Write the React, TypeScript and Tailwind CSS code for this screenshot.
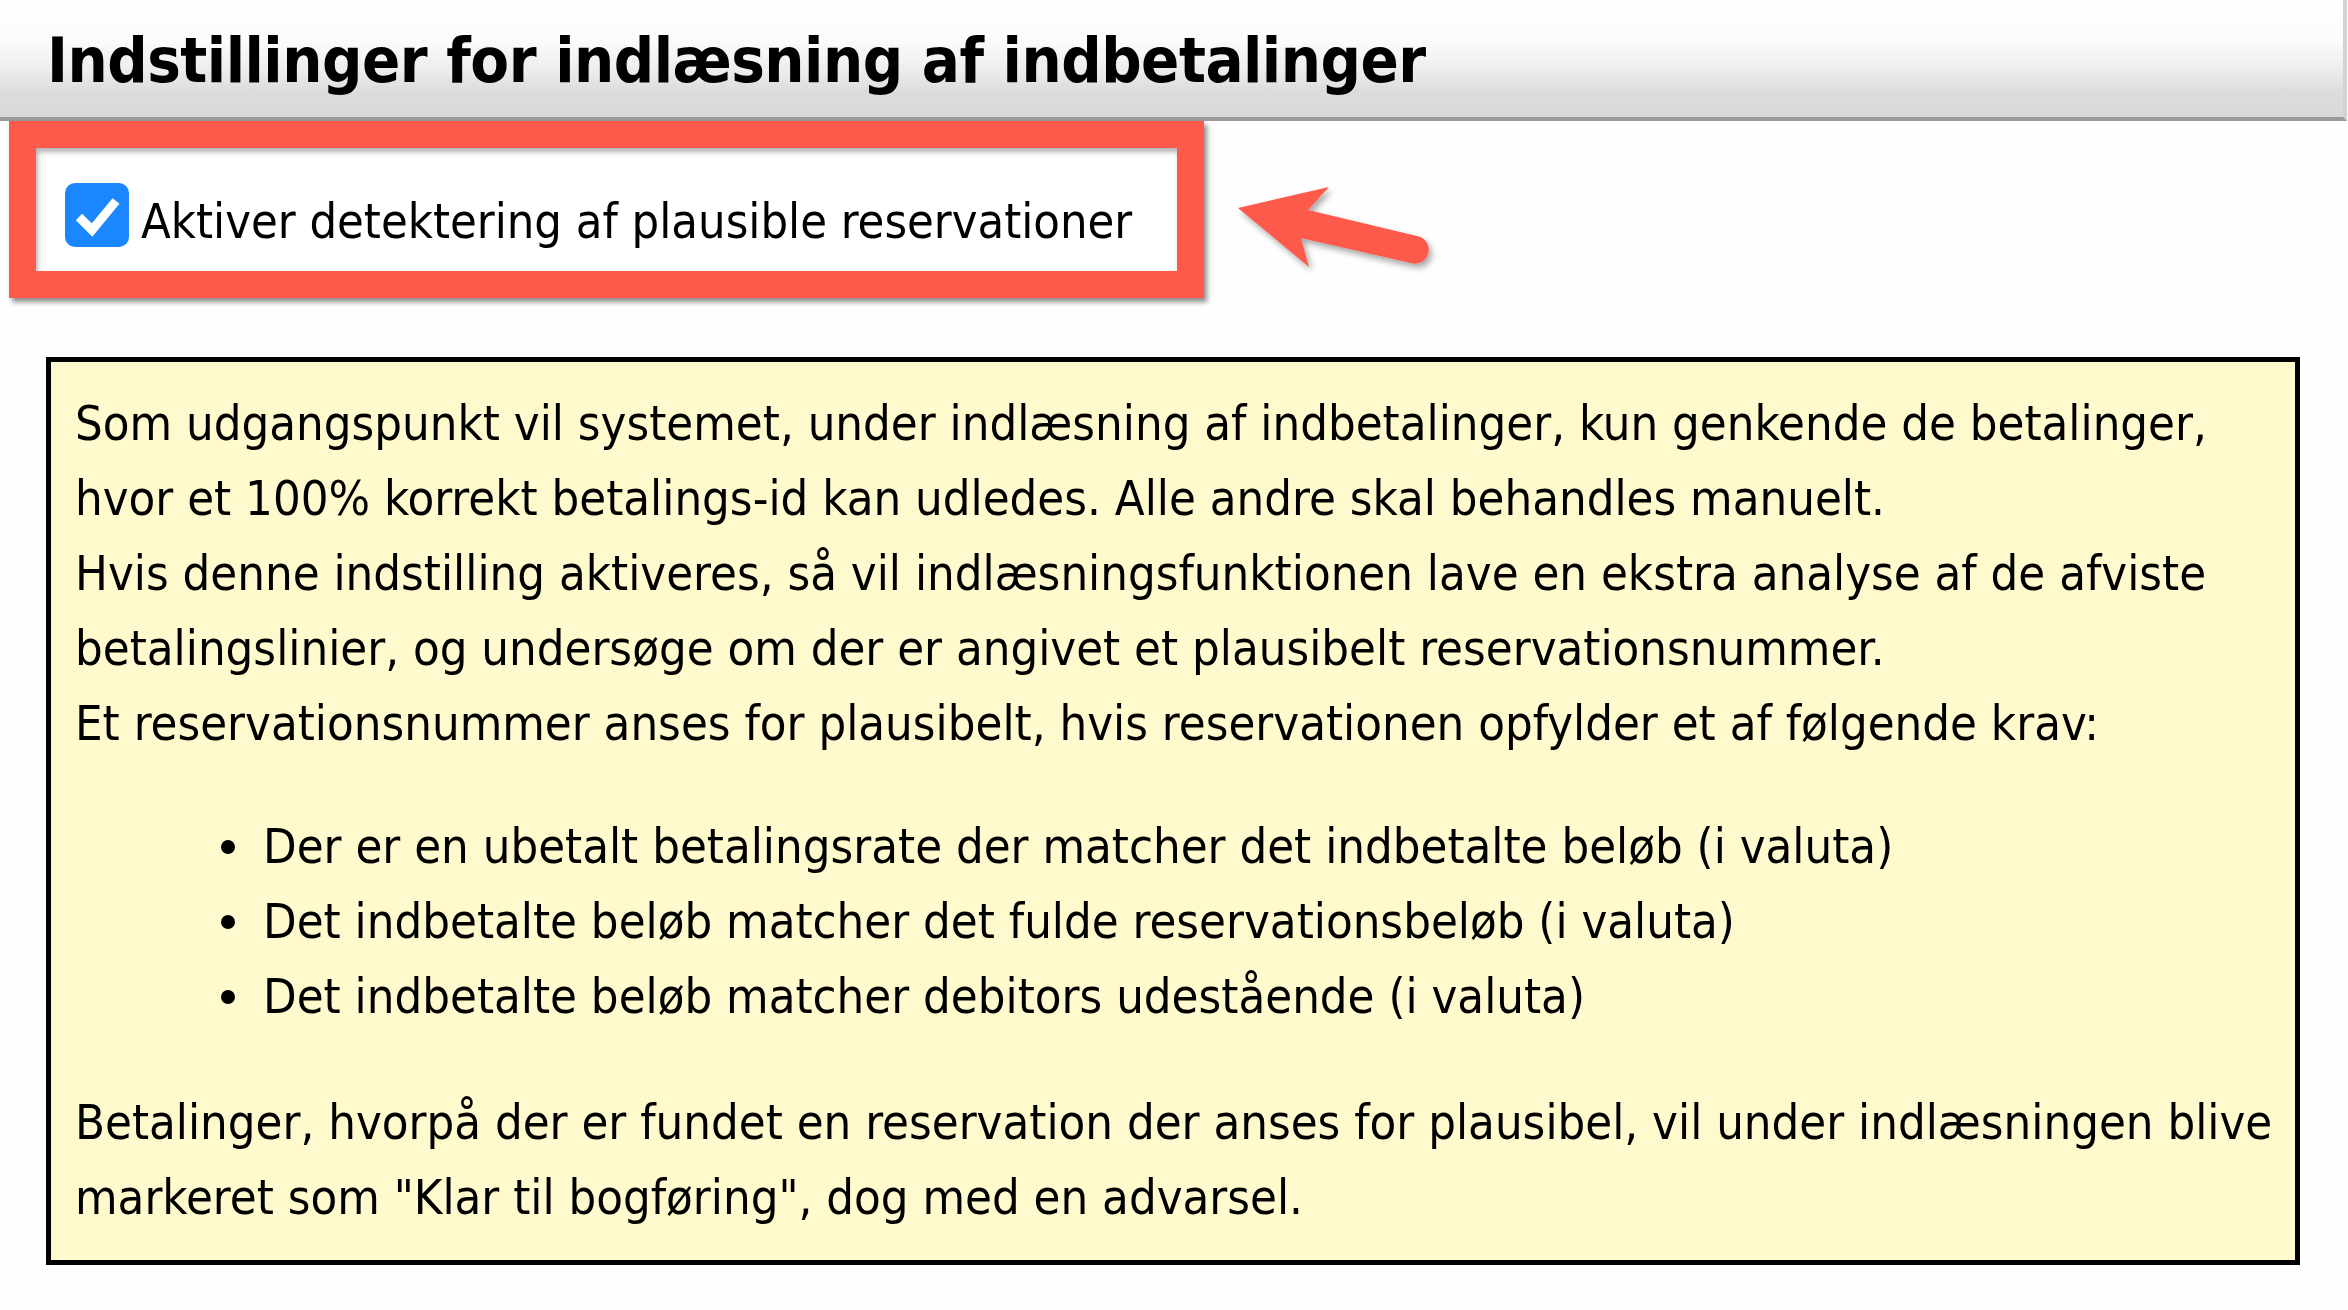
import React from "react";

const font = { fontFamily: '"DejaVu Sans Condensed", "DejaVu Sans", sans-serif' };

const intro = [
  "Som udgangspunkt vil systemet, under indlæsning af indbetalinger, kun genkende de betalinger,",
  "hvor et 100% korrekt betalings-id kan udledes. Alle andre skal behandles manuelt.",
  "Hvis denne indstilling aktiveres, så vil indlæsningsfunktionen lave en ekstra analyse af de afviste",
  "betalingslinier, og undersøge om der er angivet et plausibelt reservationsnummer.",
  "Et reservationsnummer anses for plausibelt, hvis reservationen opfylder et af følgende krav:",
];

const rules = [
  "Der er en ubetalt betalingsrate der matcher det indbetalte beløb (i valuta)",
  "Det indbetalte beløb matcher det fulde reservationsbeløb (i valuta)",
  "Det indbetalte beløb matcher debitors udestående (i valuta)",
];

const outro = [
  "Betalinger, hvorpå der er fundet en reservation der anses for plausibel, vil under indlæsningen blive",
  'markeret som "Klar til bogføring", dog med en advarsel.',
];

function Arrow() {
  return (
    <svg width="210" height="100" viewBox="0 0 210 100" className="shrink-0">
      <defs>
        <filter id="arrow-shadow" x="-20%" y="-30%" width="140%" height="160%">
          <feDropShadow dx="3" dy="4" stdDeviation="3" floodColor="#000" floodOpacity="0.35" />
        </filter>
      </defs>
      <path
        d="M7 28 L98 7 L77 30 L188 56.4 A14 14 0 0 1 181.8 83.6 L70 58 L78 87 Z"
        fill="#fd5a4c"
        filter="url(#arrow-shadow)"
      />
    </svg>
  );
}

export default function App() {
  return (
    <div className="min-h-screen w-full bg-[#fefefe] text-black" style={font}>
      <div className="mr-[1px] h-[121px] border-r-4 border-b-4 border-r-[#d2d2d4] border-b-[#9a9a9a] bg-[linear-gradient(to_bottom,#ffffff_0%,#fbfbfb_35%,#ededee_60%,#dcdcde_78%,#d9d9db_100%)] pl-[47px] pt-[19px]">
        <h1 className="whitespace-nowrap text-[62.8px] font-bold leading-[84px] tracking-[-0.5px]">
          Indstillinger for indlæsning af indbetalinger
        </h1>
      </div>

      <div className="flex items-start">
        <div className="ml-[9px] w-[1195px] border-[27px] border-[#fd5a4c] bg-white pl-[29px] pt-[35px] pb-[24px] shadow-[3px_4px_5px_rgba(0,0,0,0.45),inset_2px_4px_5px_rgba(0,0,0,0.3)]">
          <div className="flex h-[64px] items-center">
            <div className="flex h-[64px] w-[64px] shrink-0 items-center justify-center rounded-[10px] bg-[#1a86ff]">
              <svg width="64" height="64" viewBox="0 0 64 64">
                <polyline points="14,34 27,47 51,18" fill="none" stroke="#fff" strokeWidth="9" />
              </svg>
            </div>
            <span className="ml-[12px] whitespace-nowrap pt-[12px] text-[48.4px] leading-[52px]">
              Aktiver detektering af plausible reservationer
            </span>
          </div>
        </div>
        <div className="ml-[27px] mt-[59px]">
          <Arrow />
        </div>
      </div>

      <div className="ml-[46px] mt-[59px] w-[2254px] border-[5px] border-black bg-[#fffacd] pl-[24px] pt-[24px] pb-[25px] text-[48.6px] leading-[75px]">
        {intro.map((line) => (
          <div key={line} className="whitespace-nowrap">
            {line}
          </div>
        ))}
        <ul className="mt-[48px] mb-[51px]">
          {rules.map((r) => (
            <li key={r} className="flex items-center whitespace-nowrap">
              <span className="ml-[146px] mr-[28px] h-[14px] w-[14px] shrink-0 rounded-full bg-black" />
              {r}
            </li>
          ))}
        </ul>
        {outro.map((line) => (
          <div key={line} className="whitespace-nowrap">
            {line}
          </div>
        ))}
      </div>
    </div>
  );
}
